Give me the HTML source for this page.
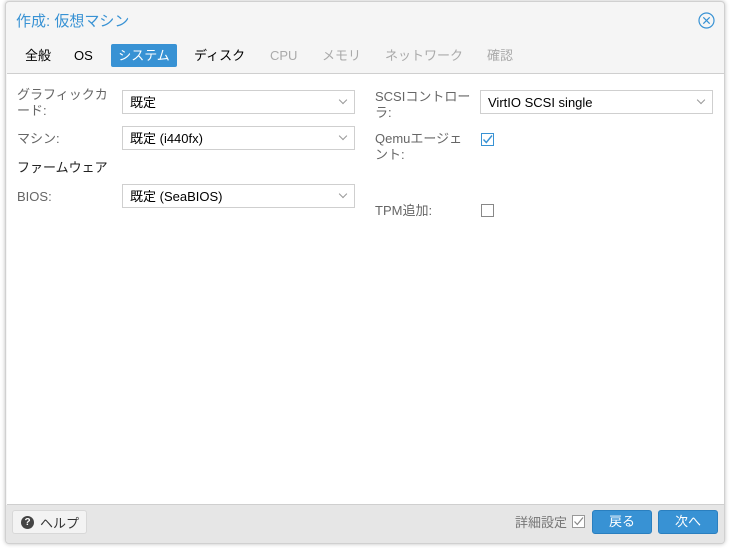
<!DOCTYPE html>
<html><head><meta charset="utf-8"><style>
*{box-sizing:border-box;margin:0;padding:0}
body{width:732px;height:548px;background:#fff;font-family:"Liberation Sans","Noto Sans CJK JP",sans-serif;font-size:13px;color:#000;position:relative;overflow:hidden}
.win{position:absolute;left:5px;top:1px;width:720px;height:543px;background:#f5f5f5;border:1px solid #d0d0d0;border-radius:4px;box-shadow:0 0 4px rgba(0,0,0,.25);overflow:hidden}
.title{position:absolute;left:10px;top:8px;font-size:15px;color:#3892d4}
.close{position:absolute;left:692px;top:10px}
.tab{position:absolute;top:42px;height:23px;line-height:23px;font-size:13px;padding:0 7px}
.body{position:absolute;left:1px;top:71px;width:717px;height:432px;background:#fff;border-top:1px solid #cfcfcf;border-bottom:1px solid #cfcfcf}
.foot{position:absolute;left:0;top:503px;width:720px;height:40px;background:#e6e6e6}
.lbl{position:absolute;color:#666;font-size:13px;line-height:16px}
.sel{position:absolute;height:24px;border:1px solid #cfcfcf;background:#fff;padding-left:7px;line-height:23px;font-size:13px}
.sel:after{content:"";position:absolute;right:8px;top:6px;width:5px;height:5px;border-right:1px solid #999;border-bottom:1px solid #999;transform:rotate(45deg)}
.cb{position:absolute;width:13px;height:13px;border:1px solid #888;background:#fff}
.btn{position:absolute;top:510px;height:24px;line-height:22px;text-align:center;color:#fff;background:#3892d4;border:1px solid #2a7fbf;border-radius:3px;font-size:13px}
</style></head><body>
<div class="win">
<div class="title">作成: 仮想マシン</div>
<svg class="close" width="17" height="17" viewBox="0 0 17 17"><circle cx="8.5" cy="8.5" r="7.5" fill="none" stroke="#3892d4" stroke-width="1.2"/><path d="M5.3 5.3L11.7 11.7M11.7 5.3L5.3 11.7" stroke="#3892d4" stroke-width="1.2"/></svg>
<div class="tab" style="left:12px">全般</div>
<div class="tab" style="left:61px">OS</div>
<div class="tab" style="left:105px;width:66px;text-align:center;padding:0;background:#3892d4;color:#fff;border-radius:2px">システム</div>
<div class="tab" style="left:181px">ディスク</div>
<div class="tab" style="left:257px;color:#aaa">CPU</div>
<div class="tab" style="left:309px;color:#aaa">メモリ</div>
<div class="tab" style="left:372px;color:#aaa">ネットワーク</div>
<div class="tab" style="left:474px;color:#aaa">確認</div>
<div class="body"></div>
<div class="foot"></div>
</div>
<div class="lbl" style="left:17px;top:87px;width:100px">グラフィックカ<br>ード:</div>
<div class="sel" style="left:122px;top:90px;width:233px">既定</div>
<div class="lbl" style="left:17px;top:131px">マシン:</div>
<div class="sel" style="left:122px;top:126px;width:233px">既定 (i440fx)</div>
<div class="lbl" style="left:17px;top:160px;color:#222">ファームウェア</div>
<div class="lbl" style="left:17px;top:189px">BIOS:</div>
<div class="sel" style="left:122px;top:184px;width:233px">既定 (SeaBIOS)</div>
<div class="lbl" style="left:375px;top:89px;width:100px">SCSIコントロー<br>ラ:</div>
<div class="sel" style="left:480px;top:90px;width:233px">VirtIO SCSI single</div>
<div class="lbl" style="left:375px;top:131px;width:100px">Qemuエージェ<br>ント:</div>
<div class="cb" style="left:481px;top:133px;border-color:#3892d4"><svg width="13" height="13" viewBox="0 0 13 13" style="position:absolute;left:-1px;top:-1px"><path d="M2.5 6.5L5.3 9.5L11 2.5" fill="none" stroke="#3892d4" stroke-width="1.4"/></svg></div>
<div class="lbl" style="left:375px;top:203px">TPM追加:</div>
<div class="cb" style="left:481px;top:204px"></div>
<div style="position:absolute;left:12px;top:510px;width:75px;height:24px;border:1px solid #d8d8d8;background:#f3f3f3;border-radius:3px;font-size:13px;color:#333;padding-left:8px;display:flex;align-items:center;gap:6px"><span style="display:inline-block;width:13px;height:13px;border-radius:50%;background:#444;color:#fff;font-size:10px;line-height:13px;text-align:center;font-weight:bold">?</span><span>ヘルプ</span></div>
<div class="lbl" style="left:515px;top:515px;color:#777">詳細設定</div>
<div class="cb" style="left:572px;top:515px;border-color:#999"><svg width="13" height="13" viewBox="0 0 13 13" style="position:absolute;left:-1px;top:-1px"><path d="M2.5 6.5L5.3 9.5L11 2.5" fill="none" stroke="#888" stroke-width="1.2"/></svg></div>
<div class="btn" style="left:592px;width:60px">戻る</div>
<div class="btn" style="left:658px;width:60px">次へ</div>
</body></html>
